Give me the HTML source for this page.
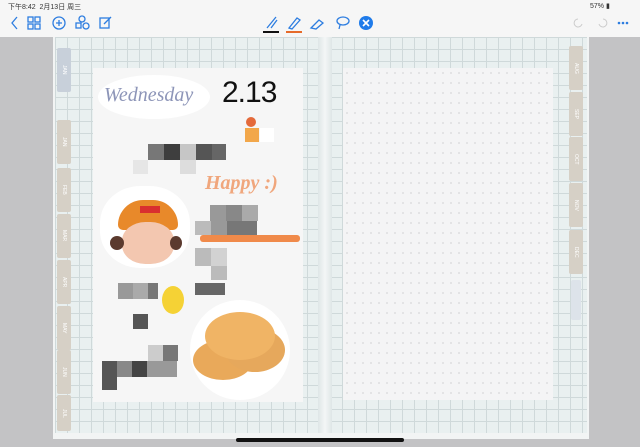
<!DOCTYPE html>
<html><head><meta charset="utf-8"><style>
*{margin:0;padding:0;box-sizing:border-box}
body{width:640px;height:447px;overflow:hidden;background:#c3c3c5;font-family:"Liberation Sans","Noto Sans CJK SC",sans-serif;position:relative}
.abs{position:absolute}
#top{left:0;top:0;width:640px;height:37px;background:#f6f6f6}
.grid{background-color:#e9f0f0;background-image:linear-gradient(#cfd9da 1px,transparent 1px),linear-gradient(90deg,#cfd9da 1px,transparent 1px);background-size:12px 12px}
.tab{position:absolute;width:14px;height:44px;background:#d6d0c6;border-radius:2px;font-size:5px;color:#fff;writing-mode:vertical-rl;text-align:center;line-height:14px}
.px{position:absolute}
</style></head><body>
<div class="abs" id="top"></div>
<div class="abs" style="left:8px;top:2px;font-size:7px;color:#333">下午8:42&nbsp; 2月13日 周三</div>
<div class="abs" style="left:590px;top:2px;font-size:7px;color:#333">57% ▮</div>
<svg class="abs" style="left:0;top:10px" width="640" height="27">
<g fill="none" stroke="#2d7de0" stroke-width="1.3">
<path d="M17 7 L12 13 L17 19"/>
<rect x="28" y="7" width="5" height="5"/><rect x="35" y="7" width="5" height="5"/><rect x="28" y="14" width="5" height="5"/><rect x="35" y="14" width="5" height="5"/>
<circle cx="59" cy="13" r="6"/><path d="M56 13h6M59 10v6"/>
<circle cx="82" cy="9" r="3"/><rect x="76" y="13" width="5" height="5"/><circle cx="86" cy="16" r="3"/>
<rect x="100" y="8" width="9" height="10"/><path d="M104 14 L111 7"/>
<path d="M267 18 L276 7 M271 18 L277 10"/><path d="M289 18 L297 8 L300 10 L292 19Z"/>
<path d="M311 18 L319 10 L323 13 L316 19Z"/>
<ellipse cx="343" cy="11" rx="6" ry="4"/><path d="M340 15 L339 19"/>
</g>
<rect x="263" y="21" width="16" height="2" fill="#111"/><rect x="286" y="21" width="16" height="2" fill="#e66a2a"/>
<circle cx="366" cy="13" r="7" fill="#1f7bea"/><path d="M363 10 L369 16 M369 10 L363 16" stroke="#fff" stroke-width="1.6"/>
<path d="M578 9 a4 4 0 1 0 4 5" fill="none" stroke="#ccc"/><path d="M603 9 a4 4 0 1 1 -4 5" fill="none" stroke="#ccc"/>
<g fill="#2d7de0"><circle cx="619" cy="13" r="1.3"/><circle cx="623" cy="13" r="1.3"/><circle cx="627" cy="13" r="1.3"/></g>
</svg>
<div class="abs" style="left:53px;top:37px;width:536px;height:402px;background:#f2f4f4"></div>
<div class="abs grid" style="left:55px;top:37px;width:265px;height:396px"></div>
<div class="abs grid" style="left:330px;top:37px;width:257px;height:396px"></div>
<div class="abs" style="left:318px;top:37px;width:14px;height:396px;background:linear-gradient(90deg,#dfe6e7,#f3f6f6,#dfe6e7)"></div>
<div class="tab" style="left:57px;top:48px;background:#c8d0da">JAN</div>
<div class="tab" style="left:57px;top:120px">JAN</div>
<div class="tab" style="left:57px;top:168px">FEB</div>
<div class="tab" style="left:57px;top:214px">MAR</div>
<div class="tab" style="left:57px;top:260px">APR</div>
<div class="tab" style="left:57px;top:306px">MAY</div>
<div class="tab" style="left:57px;top:350px">JUN</div>
<div class="tab" style="left:57px;top:395px;height:36px">JUL</div>
<div class="tab" style="left:569px;top:46px">AUG</div>
<div class="tab" style="left:569px;top:92px">SEP</div>
<div class="tab" style="left:569px;top:137px">OCT</div>
<div class="tab" style="left:569px;top:183px">NOV</div>
<div class="tab" style="left:569px;top:230px">DEC</div>
<div class="tab" style="left:571px;top:280px;width:10px;height:40px;background:#dde3ea"></div>
<div class="abs" style="left:93px;top:68px;width:210px;height:334px;background:#f6f6f6"></div>
<div class="abs" style="left:98px;top:75px;width:112px;height:44px;background:#fff;border-radius:50%"></div>
<div class="abs" style="left:104px;top:84px;font-family:'Liberation Serif',serif;font-style:italic;font-size:20px;color:#8d95b8">Wednesday</div>
<div class="abs" style="left:222px;top:76px;font-size:30px;color:#111;letter-spacing:-1px">2.13</div>
<div class="px" style="left:245px;top:128px;width:14px;height:14px;background:#f2a74a"></div>
<div class="px" style="left:260px;top:128px;width:14px;height:14px;background:#fff"></div>
<div class="px" style="left:246px;top:117px;width:10px;height:10px;background:#e46a3b;border-radius:50%"></div>
<div class="px" style="left:148px;top:144px;width:16px;height:16px;background:#777"></div>
<div class="px" style="left:164px;top:144px;width:16px;height:16px;background:#3e3e3e"></div>
<div class="px" style="left:180px;top:144px;width:16px;height:16px;background:#c6c6c6"></div>
<div class="px" style="left:196px;top:144px;width:16px;height:16px;background:#555"></div>
<div class="px" style="left:212px;top:144px;width:14px;height:16px;background:#666"></div>
<div class="px" style="left:180px;top:160px;width:16px;height:14px;background:#ddd"></div>
<div class="px" style="left:133px;top:160px;width:15px;height:14px;background:#e6e6e6"></div>
<div class="abs" style="left:205px;top:172px;font-family:'Liberation Serif',serif;font-style:italic;font-size:20px;font-weight:bold;color:#f0a67c">Happy :)</div>
<div class="px" style="left:210px;top:205px;width:16px;height:16px;background:#999"></div>
<div class="px" style="left:226px;top:205px;width:16px;height:16px;background:#888"></div>
<div class="px" style="left:242px;top:205px;width:16px;height:16px;background:#aaa"></div>
<div class="px" style="left:195px;top:221px;width:16px;height:14px;background:#bbb"></div>
<div class="px" style="left:211px;top:221px;width:16px;height:14px;background:#999"></div>
<div class="px" style="left:227px;top:221px;width:30px;height:14px;background:#777"></div>
<div class="px" style="left:200px;top:235px;width:100px;height:7px;background:#f08a4a;border-radius:3px"></div>
<div class="px" style="left:195px;top:248px;width:16px;height:18px;background:#bbb"></div>
<div class="px" style="left:211px;top:248px;width:16px;height:18px;background:#d2d2d2"></div>
<div class="px" style="left:211px;top:266px;width:16px;height:14px;background:#bbb"></div>
<div class="abs" style="left:100px;top:186px;width:90px;height:82px;background:#fff;border-radius:45%"></div>
<div class="abs" style="left:118px;top:200px;width:60px;height:30px;background:#e8892a;border-radius:30px 30px 6px 6px"></div>
<div class="abs" style="left:140px;top:206px;width:20px;height:7px;background:#d92f2f"></div>
<div class="abs" style="left:122px;top:222px;width:52px;height:42px;background:#f3c7b0;border-radius:45%"></div>
<div class="abs" style="left:110px;top:236px;width:14px;height:14px;background:#5b3a2e;border-radius:50%"></div>
<div class="abs" style="left:170px;top:236px;width:12px;height:14px;background:#5b3a2e;border-radius:50%"></div>
<div class="px" style="left:118px;top:283px;width:15px;height:16px;background:#999"></div>
<div class="px" style="left:133px;top:283px;width:15px;height:16px;background:#aaa"></div>
<div class="px" style="left:148px;top:283px;width:10px;height:16px;background:#777"></div>
<div class="px" style="left:133px;top:314px;width:15px;height:15px;background:#555"></div>
<div class="px" style="left:195px;top:283px;width:30px;height:12px;background:#666"></div>
<div class="abs" style="left:162px;top:286px;width:22px;height:28px;background:#f5d235;border-radius:50%"></div>
<div class="px" style="left:148px;top:345px;width:15px;height:16px;background:#ccc"></div>
<div class="px" style="left:163px;top:345px;width:15px;height:16px;background:#777"></div>
<div class="px" style="left:102px;top:361px;width:15px;height:16px;background:#555"></div>
<div class="px" style="left:117px;top:361px;width:15px;height:16px;background:#888"></div>
<div class="px" style="left:132px;top:361px;width:15px;height:16px;background:#444"></div>
<div class="px" style="left:147px;top:361px;width:30px;height:16px;background:#999"></div>
<div class="px" style="left:102px;top:377px;width:15px;height:13px;background:#555"></div>
<div class="abs" style="left:190px;top:300px;width:100px;height:100px;background:#fff;border-radius:50%"></div>
<div class="abs" style="left:193px;top:340px;width:60px;height:40px;background:#e9a95a;border-radius:50%"></div>
<div class="abs" style="left:225px;top:328px;width:60px;height:44px;background:#e6a85c;border-radius:50%"></div>
<div class="abs" style="left:205px;top:312px;width:70px;height:48px;background:#f0b465;border-radius:50%"></div>
<div class="abs" style="left:343px;top:68px;width:210px;height:332px;background-color:#f4f4f5;background-image:radial-gradient(#d6d6d8 0.7px,transparent 0.8px);background-size:8px 10px"></div>
<div class="abs" style="left:236px;top:438px;width:168px;height:4px;background:#111;border-radius:2px"></div>
</body></html>
